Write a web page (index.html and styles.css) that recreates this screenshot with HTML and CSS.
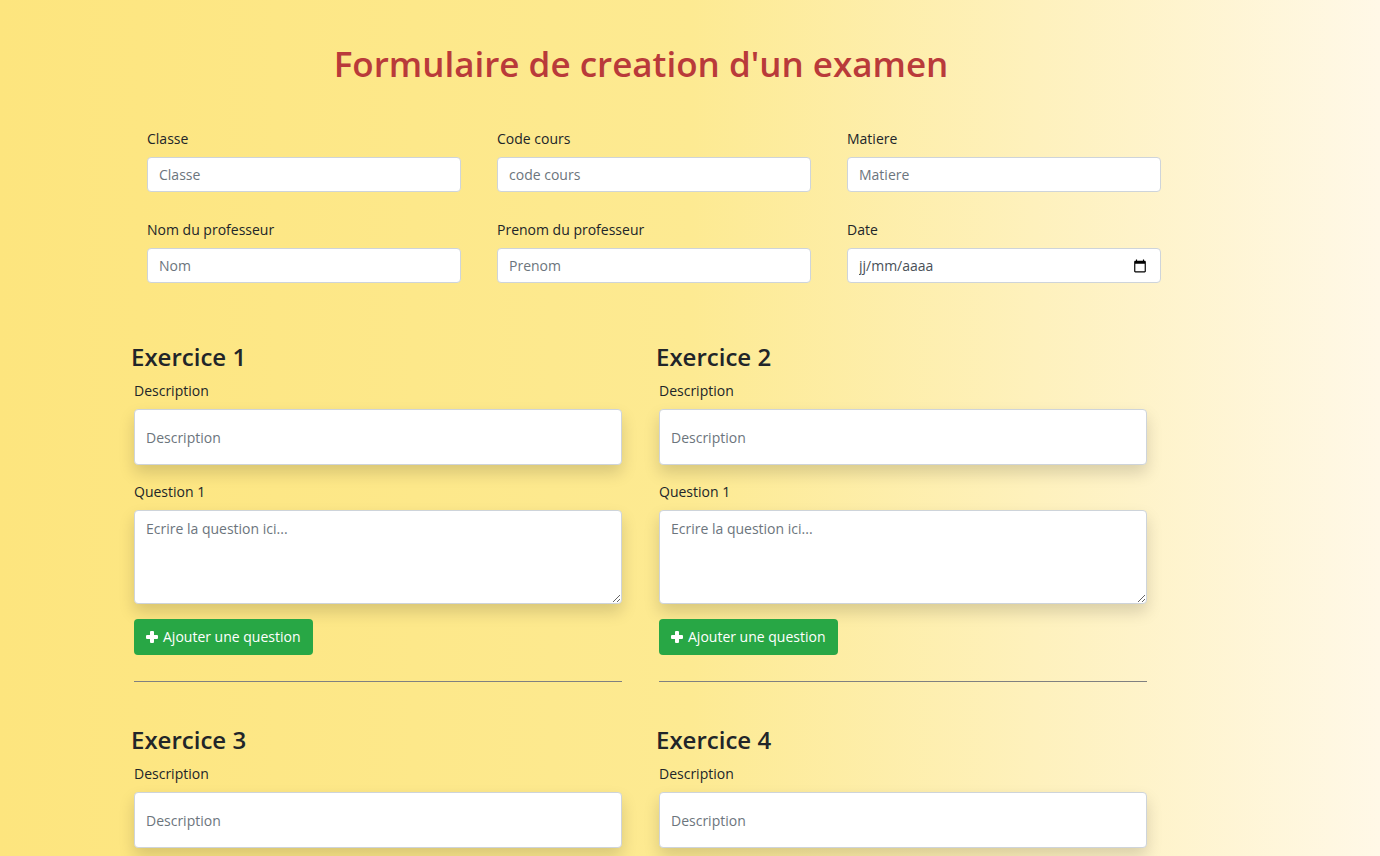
FILE: index.html
```html
<!DOCTYPE html>
<html lang="fr">
<head>
<meta charset="utf-8">
<meta name="viewport" content="width=device-width, initial-scale=1">
<title>Formulaire de creation d'un examen</title>
<link rel="stylesheet" href="styles.css">
</head>
<body>
<form class="page">
  <h1 class="title">Formulaire de creation d'un examen</h1>
  <div class="infos">
    <div class="field"><label class="label" for="classe">Classe</label><input class="control" id="classe" type="text" placeholder="Classe"></div>
    <div class="field"><label class="label" for="code">Code cours</label><input class="control" id="code" type="text" placeholder="code cours"></div>
    <div class="field"><label class="label" for="matiere">Matiere</label><input class="control" id="matiere" type="text" placeholder="Matiere"></div>
    <div class="field"><label class="label" for="nom">Nom du professeur</label><input class="control" id="nom" type="text" placeholder="Nom"></div>
    <div class="field"><label class="label" for="prenom">Prenom du professeur</label><input class="control" id="prenom" type="text" placeholder="Prenom"></div>
    <div class="field">
      <label class="label" for="date">Date</label>
      <div class="date">
        <input class="control control-date" id="date" type="text" placeholder="jj/mm/aaaa">
        <button class="date-button" type="button" aria-label="Ouvrir le calendrier">
          <svg class="date-icon" viewBox="0 0 24 24" aria-hidden="true"><path d="M20 3h-1V1h-2v2H7V1H5v2H4c-1.100 0-2 .9-2 2v16c0 1.100.9 2 2 2h16c1.100 0 2-.9 2-2V5c0-1.100-.9-2-2-2zm0 18H4V8h16v13z"/></svg>
        </button>
      </div>
    </div>
  </div>

  <div class="exercises">
    <section class="exercise">
      <h2 class="heading">Exercice 1</h2>
      <div class="body">
        <label class="label" for="desc1">Description</label>
        <input class="control control-tall" id="desc1" type="text" placeholder="Description">
        <label class="label" for="q1">Question 1</label>
        <textarea class="control control-area" id="q1" placeholder="Ecrire la question ici..."></textarea>
        <button class="add" type="button"><svg class="plus" viewBox="0 0 12 12" aria-hidden="true"><path d="M5 0h2q1 0 1 1v3h3q1 0 1 1v2q0 1-1 1H8v3q0 1-1 1H5q-1 0-1-1V8H1q-1 0-1-1V5q0-1 1-1h3V1q0-1 1-1z"/></svg>Ajouter une question</button>
        <hr class="rule">
      </div>
    </section>
    <section class="exercise">
      <h2 class="heading">Exercice 2</h2>
      <div class="body">
        <label class="label" for="desc2">Description</label>
        <input class="control control-tall" id="desc2" type="text" placeholder="Description">
        <label class="label" for="q2">Question 1</label>
        <textarea class="control control-area" id="q2" placeholder="Ecrire la question ici..."></textarea>
        <button class="add" type="button"><svg class="plus" viewBox="0 0 12 12" aria-hidden="true"><path d="M5 0h2q1 0 1 1v3h3q1 0 1 1v2q0 1-1 1H8v3q0 1-1 1H5q-1 0-1-1V8H1q-1 0-1-1V5q0-1 1-1h3V1q0-1 1-1z"/></svg>Ajouter une question</button>
        <hr class="rule">
      </div>
    </section>
    <section class="exercise">
      <h2 class="heading">Exercice 3</h2>
      <div class="body">
        <label class="label" for="desc3">Description</label>
        <input class="control control-tall" id="desc3" type="text" placeholder="Description">
      </div>
    </section>
    <section class="exercise">
      <h2 class="heading">Exercice 4</h2>
      <div class="body">
        <label class="label" for="desc4">Description</label>
        <input class="control control-tall" id="desc4" type="text" placeholder="Description">
      </div>
    </section>
  </div>
</form>
</body>
</html>
```
FILE: styles.css
```css
*, *::before, *::after { box-sizing: border-box; }

html {
  overflow-x: hidden;
  scrollbar-width: none;
}

body {
  margin: 0;
  min-height: 100vh;
  background: linear-gradient(to right, #fde57e 0%, #fdea92 50%, #fff8e7 100%);
  color: #212529;
  font: 400 14px/22px "Open Sans", "Noto Sans", sans-serif;
}

.page { padding: 42px 214px 0 116px; }

.title {
  margin: 0 0 42px;
  color: #b93a3a;
  font-size: 35px;
  font-weight: 600;
  line-height: 44px;
  text-align: center;
}

.infos {
  display: grid;
  grid-template-columns: repeat(3, 1fr);
  gap: 27px 36px;
  padding: 0 5px 0 31px;
}

.label {
  display: block;
  margin-bottom: 7px;
}

.control {
  display: block;
  width: 100%;
  height: 35px;
  padding: 0 11px;
  border: 1px solid #ced4da;
  border-radius: 4px;
  background: #fff;
  color: #495057;
  font: inherit;
}

.control::placeholder { color: #6c757d; opacity: 1; }
.control-date::placeholder { color: #495057; }

.date { position: relative; }

.date-button {
  position: absolute;
  top: 0;
  right: 8px;
  display: flex;
  align-items: center;
  height: 100%;
  padding: 0 6px;
  border: 0;
  background: none;
}

.date-icon { width: 14px; height: 14px; fill: #000; }

.exercises {
  display: grid;
  grid-template-columns: repeat(2, 1fr);
  gap: 43px 34px;
  margin-top: 59px;
  padding: 0 19px 0 15px;
}

.heading {
  margin: 0 0 8px;
  font-size: 24px;
  font-weight: 600;
  line-height: 30px;
}

.body { padding-left: 3px; }

.control-tall,
.control-area {
  box-shadow: 0 8px 16px rgba(0, 0, 0, 0.15);
}

.control-tall { height: 56px; margin-bottom: 16px; }

.control-area {
  height: 94px;
  margin-bottom: 15px;
  padding: 7px 11px;
  resize: vertical;
}

.add {
  display: flex;
  align-items: center;
  gap: 5px;
  height: 36px;
  padding: 0 12px;
  border: 0;
  border-radius: 4px;
  background: #28a745;
  color: #fff;
  font: inherit;
}

.plus { width: 12px; height: 12px; fill: #fff; }

.rule {
  height: 1px;
  margin: 26px 0 0;
  border: 0;
  background: #808080;
}
```
